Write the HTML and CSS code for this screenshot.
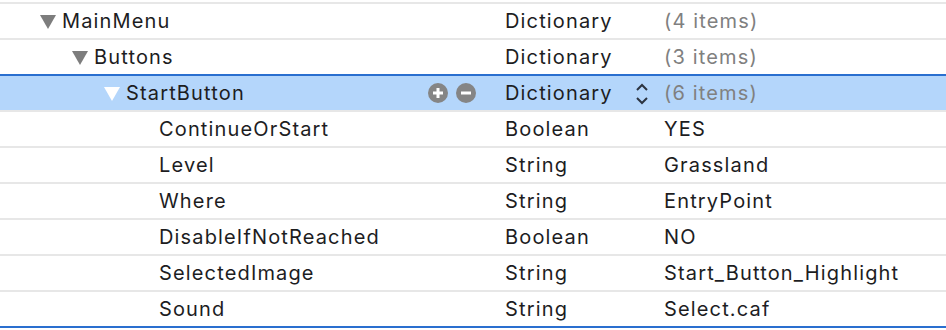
FILE: index.html
```html
<!DOCTYPE html>
<html>
<head>
<meta charset="utf-8">
<link rel="stylesheet" href="styles.css">
</head>
<body>
<div class="plist">
  <div class="row">
    <div class="key d0"><span class="tri"></span><span class="name">MainMenu</span></div>
    <div class="type">Dictionary</div>
    <div class="val muted">(4 items)</div>
  </div>
  <div class="row">
    <div class="key d1"><span class="tri"></span><span class="name">Buttons</span></div>
    <div class="type">Dictionary</div>
    <div class="val muted">(3 items)</div>
  </div>
  <div class="row selected">
    <div class="key d2"><span class="tri"></span><span class="name">StartButton</span>
      <span class="btns">
        <svg class="circ" width="20" height="20" viewBox="0 0 20 20"><circle cx="10" cy="10" r="10" fill="#858585"/><rect x="5" y="8.5" width="10" height="3" fill="#fff"/><rect x="8.5" y="5" width="3" height="10" fill="#fff"/></svg>
        <svg class="circ" width="20" height="20" viewBox="0 0 20 20"><circle cx="10" cy="10" r="10" fill="#858585"/><rect x="5" y="8.5" width="10" height="3" fill="#fff"/></svg>
      </span>
    </div>
    <div class="type">Dictionary
      <svg class="stepper" width="14" height="22" viewBox="0 0 14 22"><path d="M2 7 L7 2 L12 7" fill="none" stroke="#2c3440" stroke-width="2"/><path d="M2 15 L7 20 L12 15" fill="none" stroke="#2c3440" stroke-width="2"/></svg>
    </div>
    <div class="val muted">(6 items)</div>
  </div>
  <div class="row">
    <div class="key d3"><span class="name">ContinueOrStart</span></div>
    <div class="type">Boolean</div>
    <div class="val">YES</div>
  </div>
  <div class="row">
    <div class="key d3"><span class="name">Level</span></div>
    <div class="type">String</div>
    <div class="val">Grassland</div>
  </div>
  <div class="row">
    <div class="key d3"><span class="name">Where</span></div>
    <div class="type">String</div>
    <div class="val">EntryPoint</div>
  </div>
  <div class="row">
    <div class="key d3"><span class="name">DisableIfNotReached</span></div>
    <div class="type">Boolean</div>
    <div class="val">NO</div>
  </div>
  <div class="row">
    <div class="key d3"><span class="name">SelectedImage</span></div>
    <div class="type">String</div>
    <div class="val">Start_Button_Highlight</div>
  </div>
  <div class="row last">
    <div class="key d3"><span class="name">Sound</span></div>
    <div class="type">String</div>
    <div class="val">Select.caf</div>
  </div>
</div>
</body>
</html>
```
FILE: styles.css
```css
html, body {
  margin: 0;
  padding: 0;
  background: #ffffff;
}
body {
  width: 946px;
  height: 330px;
  overflow: hidden;
  font-family: Inter, "Liberation Sans", sans-serif;
  font-size: 20px;
  letter-spacing: 1.15px;
  color: #1d1d1f;
}
.plist {
  padding-top: 2px;
  display: flex;
  flex-direction: column;
}
.row {
  display: grid;
  grid-template-columns: 505px 159px 1fr;
  height: 34px;
  border-top: 2px solid #e7e7e7;
  align-items: center;
}
.row.selected {
  border-top-color: #2a6fcf;
  background: #b4d6fb;
}
.row.last {
  border-bottom: 2px solid #2a6fcf;
}
.key {
  display: flex;
  align-items: center;
  height: 100%;
  padding-left: 40px;
  box-sizing: border-box;
}
.key.d1 { padding-left: 72px; }
.key.d2 { padding-left: 104px; }
.key.d3 { padding-left: 159px; }
.tri {
  width: 0;
  height: 0;
  border-left: 8px solid transparent;
  border-right: 8px solid transparent;
  border-top: 14px solid #7d7d7d;
  margin-right: 6px;
  margin-top: 1px;
}
.selected .tri {
  border-top-color: #ffffff;
}
.btns {
  margin-left: auto;
  margin-right: 29px;
  display: flex;
  gap: 8px;
}
.circ { display: block; }
.type {
  display: flex;
  align-items: center;
  height: 100%;
}
.stepper {
  margin-left: auto;
  margin-right: 15px;
  margin-top: 2px;
}
.val {
  white-space: nowrap;
}
.muted {
  color: #808080;
}
```
